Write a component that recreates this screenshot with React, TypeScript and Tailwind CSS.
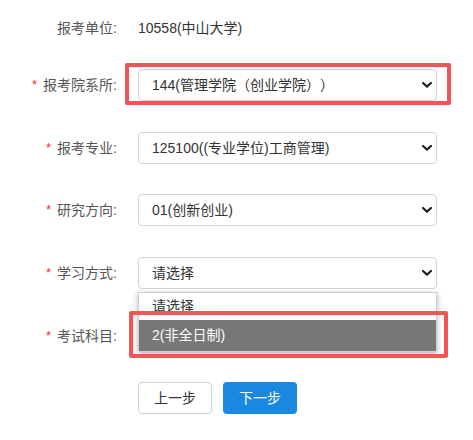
import React from "react";

const font = { fontFamily: '"Liberation Sans", "Noto Sans CJK SC", sans-serif' };

function Chevron() {
  return (
    <svg width="10" height="6" viewBox="0 0 10 6" className="absolute right-[4px] top-1/2 -translate-y-1/2">
      <path d="M1 1 L5 4.6 L9 1" fill="none" stroke="#222" strokeWidth="2.2" strokeLinecap="round" strokeLinejoin="round" />
    </svg>
  );
}

function Label({ text, req = true }: { text: string; req?: boolean }) {
  return (
    <div className="w-[117px] shrink-0 flex justify-end items-center text-[14px] text-[#555]">
      {req && <span className="text-[#f0302e] mr-[6px] text-[13px]">*</span>}
      <span>{text}</span>
    </div>
  );
}

function Select({ value, children }: { value: string; children?: React.ReactNode }) {
  return (
    <div className="relative w-[299px] h-[32px] ml-[21px]">
      <div className="h-full w-full border border-[#d4d4d4] rounded-[4px] bg-white flex items-center pl-[13px] text-[14px] text-[#333] relative">
        {value}
        <Chevron />
      </div>
      {children}
    </div>
  );
}

export default function App() {
  return (
    <div className="relative w-[473px] h-[440px] bg-white overflow-hidden [text-spacing-trim:space-all]" style={font}>
      <div className="flex flex-col pt-[12px]">
        <div className="flex items-center h-[32px]">
          <Label text="报考单位:" req={false} />
          <div className="ml-[21px] text-[14px] text-[#333]">10558(中山大学)</div>
        </div>
        <div className="flex items-center mt-[25px]">
          <Label text="报考院系所:" />
          <Select value="144(管理学院（创业学院））" />
        </div>
        <div className="flex items-center mt-[31px]">
          <Label text="报考专业:" />
          <Select value="125100((专业学位)工商管理)" />
        </div>
        <div className="flex items-center mt-[30px]">
          <Label text="研究方向:" />
          <Select value="01(创新创业)" />
        </div>
        <div className="flex items-center mt-[31px] relative z-10">
          <Label text="学习方式:" />
          <Select value="请选择">
            <div className="absolute left-0 top-[35px] w-full bg-white border border-[#cfcfcf] shadow-[0_2px_6px_rgba(0,0,0,0.3)] text-[14px]">
              <div className="h-[27px] flex items-center pl-[13px] text-[#333]">请选择</div>
              <div className="h-[31px] flex items-center pl-[13px] bg-[#777777] text-white">2(非全日制)</div>
            </div>
          </Select>
        </div>
        <div className="flex items-center mt-[31px]">
          <Label text="考试科目:" />
          <Select value="" />
        </div>
        <div className="flex items-center mt-[30px] pl-[138px] gap-[11px]">
          <button className="w-[74px] h-[32px] border border-[#d0d0d0] rounded-[4px] bg-white text-[14px] text-[#333]">上一步</button>
          <button className="w-[74px] h-[32px] rounded-[4px] bg-[#1a88e0] text-[14px] text-white">下一步</button>
        </div>
      </div>
      <div className="absolute left-[125px] top-[63px] w-[326px] h-[42px] border-4 border-[#f25555] rounded-[2px] pointer-events-none z-20" />
      <div className="absolute left-[129px] top-[311px] w-[319px] h-[47px] border-4 border-[#f25555] rounded-[2px] pointer-events-none z-20" />
    </div>
  );
}
